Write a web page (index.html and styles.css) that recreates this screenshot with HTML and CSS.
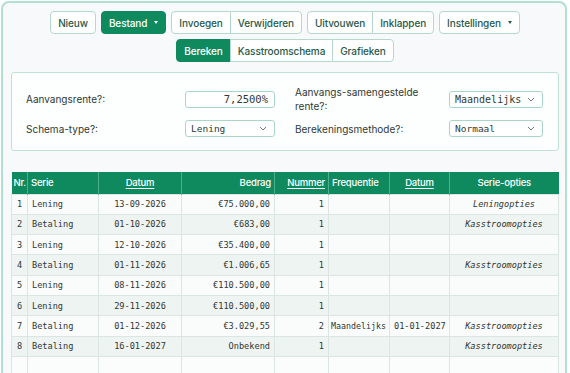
FILE: index.html
```html
<!DOCTYPE html>
<html lang="nl">
<head>
<meta charset="utf-8">
<title>Leningschema</title>
<link rel="stylesheet" href="styles.css">
</head>
<body>
<div class="app">
  <div class="toolbar">
    <div class="btn-row">
      <button class="btn">Nieuw</button>
      <button class="btn btn-primary">Bestand <span class="caret"></span></button>
      <div class="group">
        <button class="btn">Invoegen</button>
        <button class="btn">Verwijderen</button>
      </div>
      <div class="group">
        <button class="btn">Uitvouwen</button>
        <button class="btn">Inklappen</button>
      </div>
      <button class="btn">Instellingen <span class="caret dark"></span></button>
    </div>
    <div class="btn-row">
      <div class="group">
        <button class="btn btn-primary">Bereken</button>
        <button class="btn">Kasstroomschema</button>
        <button class="btn">Grafieken</button>
      </div>
    </div>
  </div>

  <div class="params">
    <div class="label">Aanvangsrente?:</div>
    <div class="field right">7,2500%</div>
    <div class="label col3">Aanvangs-samengestelde<br>rente?:</div>
    <div class="field select">Maandelijks<svg class="chev" viewBox="0 0 8 5"><path d="M1 1l3 3 3-3" /></svg></div>

    <div class="label">Schema-type?:</div>
    <div class="field select">Lening<svg class="chev" viewBox="0 0 8 5"><path d="M1 1l3 3 3-3" /></svg></div>
    <div class="label col3">Berekeningsmethode?:</div>
    <div class="field select">Normaal<svg class="chev" viewBox="0 0 8 5"><path d="M1 1l3 3 3-3" /></svg></div>
  </div>

  <table class="schedule">
    <colgroup>
      <col class="c-nr"><col class="c-serie"><col class="c-datum"><col class="c-bedrag">
      <col class="c-nummer"><col class="c-freq"><col class="c-datum2"><col class="c-opties">
    </colgroup>
    <thead>
      <tr>
        <th class="l tight">Nr.</th>
        <th class="l">Serie</th>
        <th class="c"><a>Datum</a></th>
        <th class="r">Bedrag</th>
        <th class="r"><a>Nummer</a></th>
        <th class="l">Frequentie</th>
        <th class="c"><a>Datum</a></th>
        <th class="c">Serie-opties</th>
      </tr>
    </thead>
    <tbody>
      <tr><td class="nr">1</td><td>Lening</td><td class="c">13-09-2026</td><td class="r">€75.000,00</td><td class="r">1</td><td></td><td class="c"></td><td class="c i">Leningopties</td></tr>
      <tr><td class="nr">2</td><td>Betaling</td><td class="c">01-10-2026</td><td class="r">€683,00</td><td class="r">1</td><td></td><td class="c"></td><td class="c i">Kasstroomopties</td></tr>
      <tr><td class="nr">3</td><td>Lening</td><td class="c">12-10-2026</td><td class="r">€35.400,00</td><td class="r">1</td><td></td><td class="c"></td><td class="c i"></td></tr>
      <tr><td class="nr">4</td><td>Betaling</td><td class="c">01-11-2026</td><td class="r">€1.006,65</td><td class="r">1</td><td></td><td class="c"></td><td class="c i">Kasstroomopties</td></tr>
      <tr><td class="nr">5</td><td>Lening</td><td class="c">08-11-2026</td><td class="r">€110.500,00</td><td class="r">1</td><td></td><td class="c"></td><td class="c i"></td></tr>
      <tr><td class="nr">6</td><td>Lening</td><td class="c">29-11-2026</td><td class="r">€110.500,00</td><td class="r">1</td><td></td><td class="c"></td><td class="c i"></td></tr>
      <tr><td class="nr">7</td><td>Betaling</td><td class="c">01-12-2026</td><td class="r">€3.029,55</td><td class="r">2</td><td class="freq">Maandelijks</td><td class="c">01-01-2027</td><td class="c i">Kasstroomopties</td></tr>
      <tr><td class="nr">8</td><td>Betaling</td><td class="c">16-01-2027</td><td class="r">Onbekend</td><td class="r">1</td><td></td><td class="c"></td><td class="c i">Kasstroomopties</td></tr>
      <tr class="empty"><td></td><td></td><td></td><td></td><td></td><td></td><td></td><td></td></tr>
    </tbody>
  </table>
</div>
</body>
</html>
```

FILE: styles.css
```css
* { box-sizing: border-box; }
html, body { margin: 0; padding: 0; background: #ffffff; }
body {
  font-family: Inter, "Liberation Sans", sans-serif;
  color: #2b3b35;
  overflow: hidden;
  height: 373px;
}
.app {
  margin: 1px 3px 0 1px;
  border: 2px solid #b2e0cf;
  border-bottom: none;
  border-radius: 8px 8px 0 0;
  background: #f7f9fa;
  padding: 8px 6px 20px 8px;
  min-height: 400px;
}
.toolbar { display: flex; flex-direction: column; align-items: center; gap: 5px; }
.btn-row { display: flex; gap: 5px; justify-content: center; }
.btn {
  font-family: Inter, "Liberation Sans", sans-serif;
  font-size: 10px;
  letter-spacing: -0.1px;
  font-weight: 500;
  height: 23px;
  padding: 0 7px;
  border: 1px solid #b3d9ca;
  border-radius: 4px;
  background: #ffffff;
  color: #27594a;
  display: inline-flex;
  align-items: center;
  gap: 7px;
  cursor: pointer;
}
.btn-primary { background: #0f8a5f; border-color: #0f8a5f; color: #ffffff; }
.group { display: flex; }
.group .btn { border-radius: 0; margin-left: -1px; }
.group .btn:first-child { border-radius: 4px 0 0 4px; margin-left: 0; }
.group .btn:last-child { border-radius: 0 4px 4px 0; }
.caret {
  width: 0; height: 0;
  border-left: 2.5px solid transparent;
  border-right: 2.5px solid transparent;
  border-top: 3px solid #ffffff;
  margin-top: -1px;
}
.caret.dark { border-top-color: #27594a; }

.params {
  margin-top: 10px;
  background: #fdfefe;
  border: 1px solid #bfe2d4;
  border-radius: 3px;
  padding: 12px 15px 13px 14px;
  display: grid;
  grid-template-columns: 159px 90px 174px 94px;
  row-gap: 7px;
  align-items: center;
}
.label { font-size: 10px; line-height: 14px; color: #2e3a36; }
.label.col3 { padding-left: 20px; }
.field {
  height: 17px;
  border: 1px solid #a9d7c5;
  border-radius: 3px;
  background: #ffffff;
  font-family: "DejaVu Sans Mono", "Liberation Mono", monospace;
  font-size: 9.5px;
  color: #2f3a36;
  display: flex;
  align-items: center;
  padding: 0 5px;
}
.field.right { justify-content: flex-end; padding-right: 6px; font-size: 10.5px; }
.field.select { justify-content: space-between; padding-right: 7px; }
.field.select:nth-child(4) { font-size: 10px; }
.chev { width: 8px; height: 5px; fill: none; stroke: #6b7a75; stroke-width: 1; }

.schedule {
  margin-top: 21px;
  width: 547px;
  border-collapse: collapse;
  table-layout: fixed;
}
.c-nr { width: 16px; } .c-serie { width: 71px; } .c-datum { width: 83px; } .c-bedrag { width: 93px; }
.c-nummer { width: 54px; } .c-freq { width: 61px; } .c-datum2 { width: 60px; } .c-opties { width: 109px; }
.schedule th {
  background: #0f8a5f;
  color: #ffffff;
  font-size: 9.5px;
  letter-spacing: -0.2px;
  font-weight: 500;
  height: 22px;
  padding: 0 3px;
  border-left: 1px solid #4fae8b;
  white-space: nowrap;
}
.schedule th:first-child { border-left: none; }
.schedule th.tight { padding: 0 1px 0 2px; }
.schedule th a { color: #ffffff; text-decoration: underline; text-underline-offset: 2px; }
.schedule td {
  font-family: "DejaVu Sans Mono", "Liberation Mono", monospace;
  font-size: 8.6px;
  color: #2f3633;
  height: 20.3px;
  padding: 0 4px;
  border: 1px solid #dbe5e2;
  white-space: nowrap;
}
.schedule td.nr { padding-left: 5px; }
.schedule td.freq { padding-left: 2px; font-size: 8.3px; }
.schedule tbody tr:nth-child(odd) td { background: #fafcfc; }
.schedule tbody tr:nth-child(even) td { background: #eef4f2; }
.schedule tbody tr.empty td { background: #fbfcfc; height: 22px; }
.l { text-align: left; }
.c { text-align: center; }
.r { text-align: right; }
.i { font-style: italic; }
```
